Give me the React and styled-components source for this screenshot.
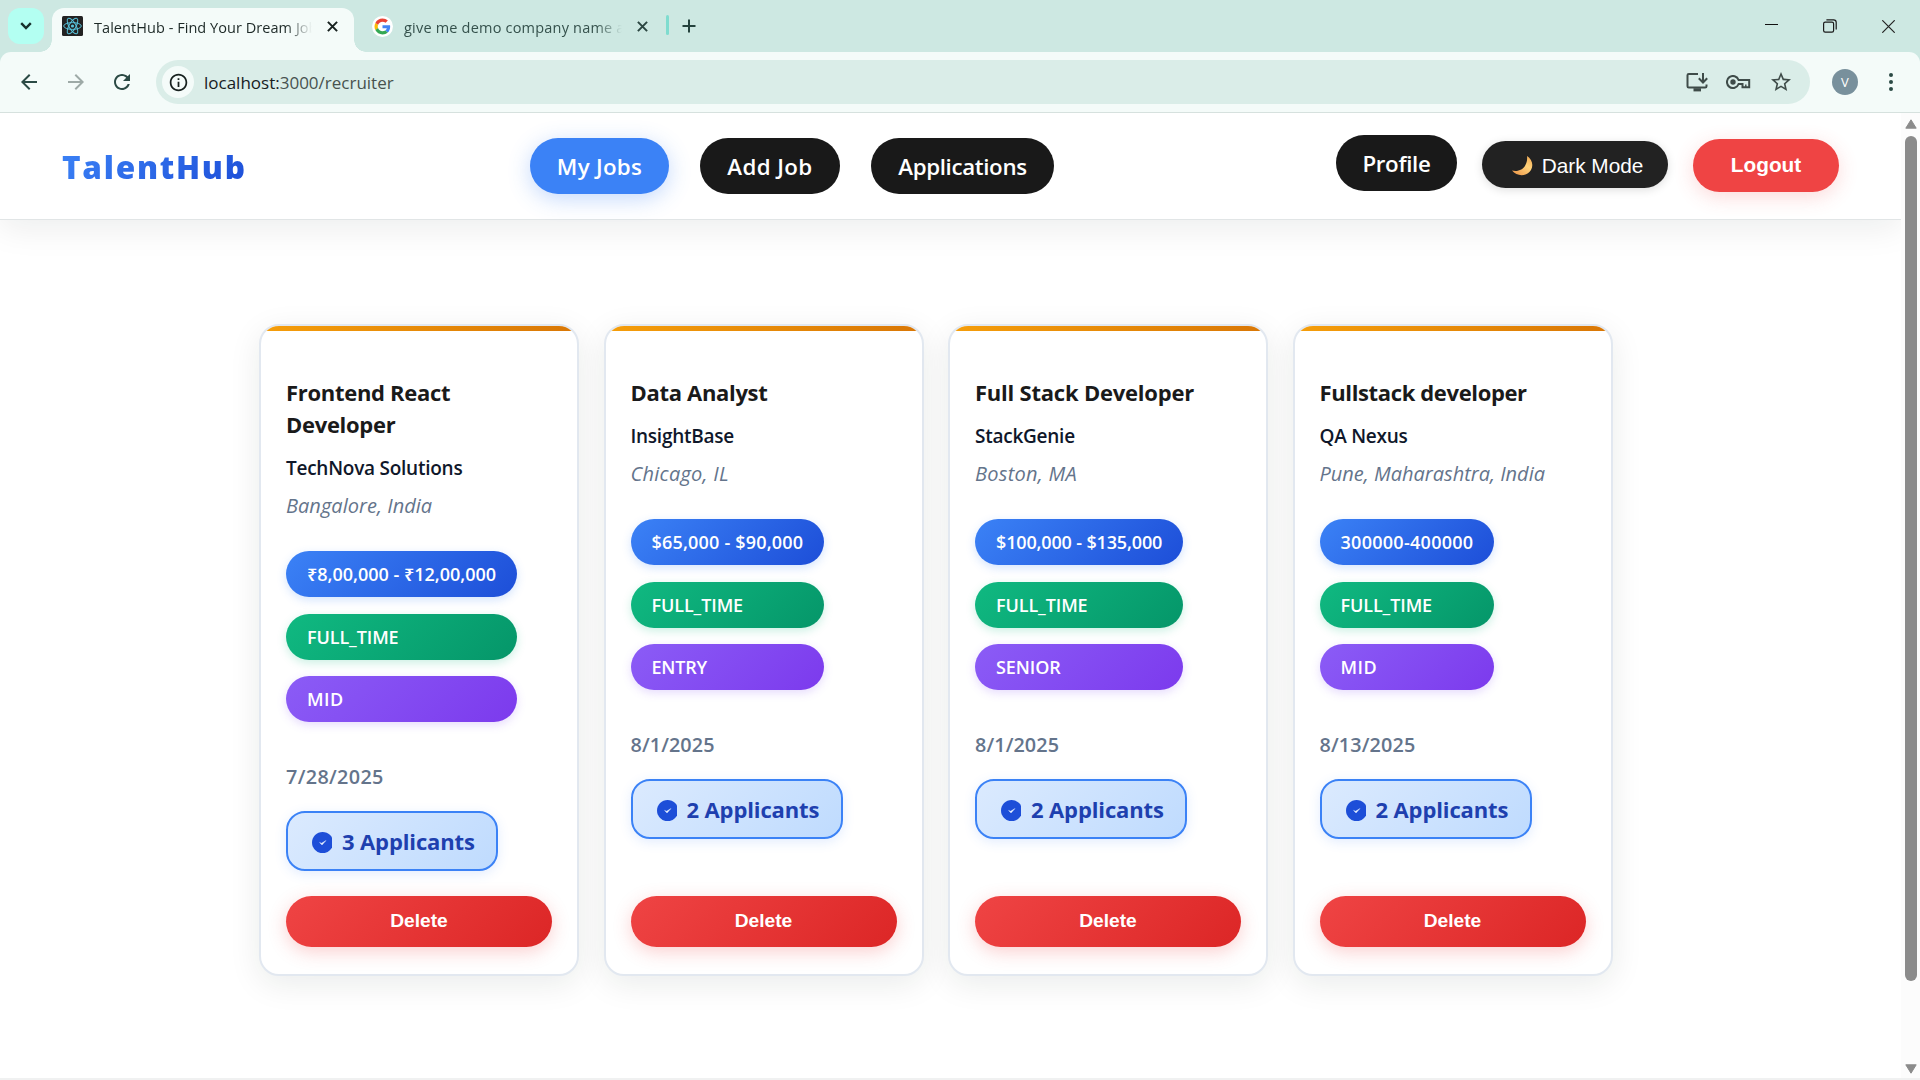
import React from "react";
import styled, { createGlobalStyle, css } from "styled-components";

const GlobalStyle = createGlobalStyle`
  *, *::before, *::after { box-sizing: border-box; }
  body {
    margin: 0;
    overflow: hidden;
    background: #fff;
    font-family: "Open Sans", "Noto Sans", sans-serif;
  }
  button { border: 0; margin: 0; padding: 0; font: inherit; }
  h2, p { margin: 0; }
  svg { display: block; flex: none; }
`;

/* ---------- browser window ---------- */

const Window = styled.div`
  width: 1920px;
  height: 1080px;
  display: flex;
  flex-direction: column;
  overflow: hidden;
  background: #cde8e2;
`;

const TabStrip = styled.div`
  height: 52px;
  display: flex;
  align-items: flex-start;
  padding: 8px 25px 0 8px;
`;

const TabSearch = styled.button`
  width: 36px;
  height: 36px;
  display: grid;
  place-items: center;
  border-radius: 12px;
  background: #b3fff2;
`;

const Tab = styled.div`
  position: relative;
  height: 44px;
  display: flex;
  align-items: center;
  padding: 0 0 8px 10px;
  color: #35514c;
  ${(p) =>
    p.$active
      ? css`
          width: 302px;
          margin-left: 8px;
          border-radius: 12px 12px 0 0;
          background: #f4fbf9;
          color: #1c2826;
          &::before, &::after {
            content: "";
            position: absolute;
            bottom: 0;
            width: 12px;
            height: 12px;
          }
          &::before {
            left: -12px;
            background: radial-gradient(circle at 0 0, transparent 11.5px, #f4fbf9 12px);
          }
          &::after {
            right: -12px;
            background: radial-gradient(circle at 100% 0, transparent 11.5px, #f4fbf9 12px);
          }
        `
      : css`
          width: 312px;
          padding-left: 18px;
        `}
`;

const TabTitle = styled.span`
  width: 218px;
  margin: 3px 15px 0 11px;
  overflow: hidden;
  white-space: nowrap;
  font-size: 14.5px;
  line-height: 22px;
  letter-spacing: ${(p) => p.$track || 0}px;
  mask-image: linear-gradient(90deg, #000 88%, transparent 100%);
`;

const TabDivider = styled.i`
  width: 3px;
  height: 20px;
  margin: 7px 14px 0 0;
  border-radius: 2px;
  background: #7fdccf;
`;

const NewTab = styled.span`
  margin: 11px 0 0 -1px;
`;

const WindowControls = styled.div`
  display: flex;
  align-items: center;
  gap: 45px;
  margin: 11px 0 0 auto;
`;

const Toolbar = styled.div`
  height: 61px;
  display: flex;
  align-items: center;
  padding: 0 17px;
  border-bottom: 1px solid #d6e1de;
  border-radius: 11px 11px 0 0;
  background: #f4fbf9;
`;

const NavIcons = styled.div`
  display: flex;
  gap: 22.5px;
`;

const AddressBar = styled.div`
  width: 1654px;
  height: 44px;
  display: flex;
  align-items: center;
  margin-left: 22px;
  padding: 0 17px 0 6px;
  border-radius: 22px;
  background: #daede8;
`;

const SiteInfo = styled.span`
  width: 32px;
  height: 32px;
  display: grid;
  place-items: center;
  border-radius: 50%;
  background: #f4fbf9;
`;

const Url = styled.span`
  flex: 1;
  margin-left: 10px;
  font-size: 17px;
  color: #47524f;
`;

const Host = styled.span`
  color: #16201e;
`;

const AddressActions = styled.div`
  display: flex;
  align-items: center;
  gap: 18px;
`;

const Avatar = styled.span`
  width: 26px;
  height: 26px;
  display: grid;
  place-items: center;
  margin: 0 31px 0 22px;
  border-radius: 50%;
  background: #78909c;
  color: #fff;
  font-size: 13px;
`;

const Viewport = styled.div`
  flex: 1;
  min-height: 0;
  display: flex;
  background: #fff;
  border-bottom: 2px solid #f0f1f1;
`;

const Scrollbar = styled.div`
  width: 19px;
  display: flex;
  flex-direction: column;
  align-items: center;
  padding: 6px 0 4px;
  background: #fcfcfc;
`;

const ScrollThumb = styled.div`
  width: 12px;
  height: 845px;
  margin: 7px 0 auto;
  border-radius: 6px;
  background: #8b8b8b;
`;

/* ---------- page ---------- */

const Page = styled.div`
  width: 1901px;
  overflow: hidden;
`;

const Navbar = styled.header`
  height: 107px;
  display: flex;
  align-items: center;
  justify-content: space-between;
  padding: 0 62px 0 62px;
  border-bottom: 1px solid #e1e5e6;
  background: #fff;
  box-shadow: 0 8px 32px rgba(10, 30, 25, 0.08);
`;

const Logo = styled.div`
  width: 186px;
  padding-top: 1px;
  font-size: 31.5px;
  font-weight: 800;
  line-height: 40px;
  letter-spacing: 1.75px;
  white-space: nowrap;
  color: transparent;
  background: linear-gradient(135deg, #3b82f6, #1d4ed8);
  background-clip: text;
  -webkit-background-clip: text;
`;

const NavLinks = styled.nav`
  display: flex;
  gap: 31px;
`;

const NavPill = styled.button`
  width: ${(p) => p.$width}px;
  height: 56px;
  margin-bottom: ${(p) => p.$lift || 0}px;
  border-radius: 28px;
  background: ${(p) => (p.$active ? "#3b82f6" : "#191919")};
  box-shadow: ${(p) => (p.$active ? "0 5px 22px rgba(59, 130, 246, 0.3)" : "none")};
  color: #fff;
  font-size: 22.3px;
  font-weight: 600;
  letter-spacing: ${(p) => p.$track || 0}px;
`;

const Account = styled.div`
  display: flex;
  align-items: center;
  gap: 25px;
`;

const ThemeToggle = styled.button`
  width: 186px;
  height: 47px;
  display: flex;
  align-items: center;
  justify-content: center;
  gap: 9px;
  margin-bottom: 3px;
  padding: 2px 0 0 5px;
  border-radius: 24px;
  background: #222;
  box-shadow: 0 2px 10px rgba(0, 0, 0, 0.13);
  color: #fff;
  font: 400 20.8px "Liberation Sans", Arial, sans-serif;
`;

const Logout = styled.button`
  width: 146px;
  height: 53px;
  margin-bottom: 2px;
  border-radius: 27px;
  background: #ef4444;
  box-shadow: 0 5px 20px rgba(239, 68, 68, 0.2);
  color: #fff;
  font: 700 20.8px "Liberation Sans", Arial, sans-serif;
`;

const JobGrid = styled.main`
  display: grid;
  grid-template-columns: repeat(4, 320px);
  column-gap: 24.5px;
  margin: 104px 0 0 259px;
`;

const Card = styled.article`
  height: 652px;
  display: flex;
  flex-direction: column;
  align-items: flex-start;
  overflow: hidden;
  border: 2px solid #e2e8f0;
  border-radius: 20px;
  background: #fff;
  box-shadow: 0 8px 32px rgba(10, 30, 25, 0.085);
`;

const Accent = styled.div`
  align-self: stretch;
  height: 5px;
  background: linear-gradient(90deg, #f59e0b, #d97706);
`;

const CardBody = styled.div`
  flex: 1;
  align-self: stretch;
  display: flex;
  flex-direction: column;
  align-items: flex-start;
  padding: 45px 25px 27px 25px;
`;

const Title = styled.h2`
  color: #1a1a1a;
  font-size: 22px;
  font-weight: 700;
  line-height: 32px;
  letter-spacing: ${(p) => p.$track}px;
`;

const Company = styled.p`
  margin-top: 14px;
  color: #0f172a;
  font-size: 19px;
  font-weight: 600;
  line-height: 28px;
  letter-spacing: -0.25px;
`;

const Place = styled.p`
  margin-top: 9px;
  color: #64748b;
  font-size: 20px;
  font-style: italic;
  line-height: 30px;
  letter-spacing: ${(p) => p.$track || 0}px;
`;

const Tags = styled.div`
  display: grid;
  gap: 16.5px;
  margin-top: 30px;
`;

const tones = {
  salary: ["#3b82f6, #1d4ed8", "59, 130, 246"],
  type: ["#10b981, #059669", "16, 185, 129"],
  level: ["#8b5cf6, #7c3aed", "139, 92, 246"],
};

const Tag = styled.span`
  height: 46px;
  padding: 0 21px;
  border-radius: 23px;
  background: linear-gradient(135deg, ${(p) => tones[p.$tone][0]});
  box-shadow: 0 3px 10px rgba(${(p) => tones[p.$tone][1]}, 0.22);
  color: #fff;
  font-size: 18px;
  font-weight: 600;
  line-height: 46px;
  white-space: nowrap;
  letter-spacing: ${(p) => p.$track || 0}px;
`;

const Posted = styled.p`
  margin-top: 41px;
  color: #64748b;
  font-size: 19.8px;
  font-weight: 600;
  line-height: 28px;
  letter-spacing: ${(p) => p.$track || 0}px;
`;

const Applicants = styled.div`
  width: 212px;
  height: 60px;
  display: flex;
  align-items: center;
  gap: 10px;
  margin-top: 20px;
  padding-left: 24px;
  border: 2px solid #3b82f6;
  border-radius: 19px;
  background: linear-gradient(135deg, #dbeafe, #bfdbfe);
  box-shadow: 0 3px 12px rgba(59, 130, 246, 0.15);
  color: #1e40af;
  font-size: 22px;
  font-weight: 700;
  letter-spacing: -0.12px;
  white-space: nowrap;
`;

const Badge = styled.span`
  padding-top: 3px;
`;

const DeleteButton = styled.button`
  align-self: stretch;
  height: 51px;
  margin-top: auto;
  padding-bottom: 2px;
  border-radius: 26px;
  background: linear-gradient(135deg, #ef4444, #dc2626);
  box-shadow: 0 5px 18px rgba(239, 68, 68, 0.25);
  color: #fff;
  font: 700 19.2px "Liberation Sans", Arial, sans-serif;
`;

/* ---------- icons ---------- */

const Glyph = ({ d, size = 24, fill = "#2b4a45" }) => (
  <svg width={size} height={size} viewBox="0 0 24 24" fill={fill}>
    <path d={d} />
  </svg>
);

const paths = {
  back: "M20 11H7.83l5.59-5.59L12 4l-8 8 8 8 1.41-1.41L7.83 13H20v-2z",
  forward: "M12 4l-1.41 1.41L16.17 11H4v2h12.17l-5.58 5.59L12 20l8-8z",
  reload:
    "M17.65 6.35C16.2 4.9 14.21 4 12 4c-4.42 0-7.99 3.58-7.99 8s3.57 8 7.99 8c3.73 0 6.84-2.55 7.73-6h-2.08c-.82 2.33-3.04 4-5.65 4-3.31 0-6-2.69-6-6s2.69-6 6-6c1.66 0 3.14.69 4.22 1.78L13 11h7V4l-2.35 2.35z",
  info: "M11 7h2v2h-2zm0 4h2v6h-2zm1-9C6.48 2 2 6.48 2 12s4.48 10 10 10 10-4.48 10-10S17.52 2 12 2zm0 18c-4.41 0-8-3.59-8-8s3.59-8 8-8 8 3.59 8 8-3.59 8-8 8z",
  star: "M22 9.24l-7.19-.62L12 2 9.19 8.63 2 9.24l5.46 4.73L5.82 21 12 17.27 18.18 21l-1.63-7.03L22 9.24zM12 15.4l-3.76 2.27 1-4.28-3.32-2.88 4.38-.38L12 6.1l1.71 4.04 4.38.38-3.32 2.88 1 4.28L12 15.4z",
};

const ChevronIcon = () => (
  <svg width="12" height="8" viewBox="0 0 12 8" fill="none" stroke="#17302b" strokeWidth="2.4">
    <path d="M1.2 1.2 6 6l4.8-4.8" />
  </svg>
);

const CloseIcon = ({ color }) => (
  <svg width="11" height="11" viewBox="0 0 11 11" stroke={color} strokeWidth="2">
    <path d="M.9.9l9.2 9.2M10.1.9.9 10.1" />
  </svg>
);

const PlusIcon = () => (
  <svg width="14" height="14" viewBox="0 0 14 14" stroke="#24423d" strokeWidth="2">
    <path d="M7 .5v13M.5 7h13" />
  </svg>
);

const ReactIcon = () => (
  <svg width="21" height="20" viewBox="0 0 21 20" fill="none" stroke="#58c4dc" strokeWidth="1">
    <rect width="21" height="20" rx="1.5" fill="#222" stroke="none" />
    <circle cx="10.5" cy="10" r="1.6" fill="#58c4dc" stroke="none" />
    <ellipse cx="10.5" cy="10" rx="8.8" ry="3.4" />
    <ellipse cx="10.5" cy="10" rx="8.8" ry="3.4" transform="rotate(60 10.5 10)" />
    <ellipse cx="10.5" cy="10" rx="8.8" ry="3.4" transform="rotate(120 10.5 10)" />
  </svg>
);

const GoogleIcon = () => (
  <svg width="21" height="21" viewBox="0 0 63 63">
    <circle cx="31.5" cy="31.5" r="31.5" fill="#fff" />
    <g transform="translate(7.5 7.5)">
      <path fill="#EA4335" d="M24 9.5c3.54 0 6.71 1.22 9.21 3.6l6.85-6.85C35.9 2.38 30.47 0 24 0 14.62 0 6.51 5.38 2.56 13.22l7.98 6.19C12.43 13.72 17.74 9.5 24 9.5z" />
      <path fill="#4285F4" d="M46.98 24.55c0-1.57-.15-3.09-.38-4.55H24v9.02h12.94c-.58 2.96-2.26 5.48-4.78 7.18l7.73 6c4.51-4.18 7.09-10.36 7.09-17.65z" />
      <path fill="#FBBC05" d="M10.53 28.59c-.48-1.45-.76-2.99-.76-4.59s.27-3.14.76-4.59l-7.98-6.19C.92 16.46 0 20.12 0 24c0 3.88.92 7.54 2.56 10.78l7.97-6.19z" />
      <path fill="#34A853" d="M24 48c6.48 0 11.93-2.13 15.89-5.81l-7.73-6c-2.15 1.45-4.92 2.3-8.16 2.3-6.26 0-11.57-4.22-13.47-9.91l-7.98 6.19C6.51 42.62 14.62 48 24 48z" />
    </g>
  </svg>
);

const InstallIcon = () => (
  <svg width="22" height="20" viewBox="0 0 22 20" fill="none" stroke="#3f4c49" strokeWidth="2">
    <path d="M12 2H2.8Q1.5 2 1.5 3.3v10.9q0 1.3 1.3 1.3h16.4q1.3 0 1.3-1.3V12.5" />
    <path d="M7.5 17.8h7.5" strokeWidth="3.2" />
    <path d="M17 1v9M12.8 6.3 17 10.5l4.2-4.2" />
  </svg>
);

const KeyIcon = () => (
  <svg width="25" height="14" viewBox="0 0 25 14" fill="none" stroke="#3f4c49" strokeWidth="2">
    <path d="M12.6 5A6 6 0 1 0 12.6 9H16.5v3.2h6.7V5z" />
    <circle cx="7" cy="7" r="2.7" fill="#3f4c49" stroke="none" />
    <path d="M19.8 12.500V9.500" strokeWidth="1.4" />
  </svg>
);

const MenuIcon = () => (
  <svg width="4" height="18" viewBox="0 0 4 18" fill="#2b4a45">
    <circle cx="2" cy="2" r="2" />
    <circle cx="2" cy="9" r="2" />
    <circle cx="2" cy="16" r="2" />
  </svg>
);

const MinimizeIcon = () => (
  <svg width="13" height="14" viewBox="0 0 13 14" stroke="#111">
    <path d="M0 5.500h13" />
  </svg>
);

const RestoreIcon = () => (
  <svg width="14" height="14" viewBox="0 0 14 14" fill="none" stroke="#1a1a1a" strokeWidth="1.2">
    <rect x=".6" y="3.2" width="10" height="10" rx="1.6" />
    <path d="M3.4.8h7.2q2.6 0 2.6 2.6v7" />
  </svg>
);

const WindowCloseIcon = () => (
  <svg width="13" height="13" viewBox="0 0 13 13" stroke="#222" strokeWidth="1.2">
    <path d="M.3.3l12.4 12.4M12.7.3.3 12.7" />
  </svg>
);

const ScrollArrow = ({ down }) => (
  <svg width="12" height="10" viewBox="0 0 12 10" fill="#8b8b8b" stroke="#8b8b8b" strokeLinejoin="round">
    <path d={down ? "M.8.8h10.4L6 9.2z" : "M.8 9.2h10.4L6 .8z"} />
  </svg>
);

const MoonIcon = () => (
  <svg width="21" height="20" viewBox="0 0 21 20">
    <defs>
      <linearGradient id="moon" x1="1" y1="0" x2="0.2" y2="1">
        <stop offset="0" stopColor="#f3a64e" />
        <stop offset="0.45" stopColor="#ffd27a" />
        <stop offset="1" stopColor="#ee9a4c" />
      </linearGradient>
    </defs>
    <path fill="url(#moon)" d="M15 0C20 3 21.8 9 19 14 15 20.8 5 21 0 14.6 6 16 11 13.5 13.2 9.5 14.8 6.5 15.5 3.5 15 0Z" />
  </svg>
);

const CheckBadge = () => (
  <svg width="20" height="21" viewBox="0 0 20 21">
    <circle cx="10.6" cy="10.6" r="10.6" fill="#1d4ed8" />
    <path d="M7.6 10.4 9.6 11.2 14 8.5 10 13z" fill="#e8f1ff" stroke="#e8f1ff" strokeWidth=".4" />
  </svg>
);

/* ---------- data ---------- */

const jobs = [
  {
    title: "Frontend React Developer", titleTrack: -0.3, company: "TechNova Solutions",
    place: "Bangalore, India", placeTrack: 0.03, salary: "₹8,00,000 - ₹12,00,000", salaryTrack: 0,
    level: "MID", levelTrack: 0.5, posted: "7/28/2025", postedTrack: 0.35, applicants: 3,
  },
  {
    title: "Data Analyst", titleTrack: -0.32, company: "InsightBase",
    place: "Chicago, IL", placeTrack: 0.25, salary: "$65,000 - $90,000", salaryTrack: 0.2,
    level: "ENTRY", levelTrack: -0.2, posted: "8/1/2025", postedTrack: 0.1, applicants: 2,
  },
  {
    title: "Full Stack Developer", titleTrack: -0.22, company: "StackGenie",
    place: "Boston, MA", placeTrack: 0.25, salary: "$100,000 - $135,000", salaryTrack: -0.15,
    level: "SENIOR", levelTrack: -0.1, posted: "8/1/2025", postedTrack: 0.1, applicants: 2,
  },
  {
    title: "Fullstack developer", titleTrack: -0.36, company: "QA Nexus",
    place: "Pune, Maharashtra, India", placeTrack: 0, salary: "300000-400000", salaryTrack: 0.28,
    level: "MID", levelTrack: 0.5, posted: "8/13/2025", postedTrack: 0.15, applicants: 2,
  },
];

const JobCard = ({ job }) => (
  <Card>
    <Accent />
    <CardBody>
      <Title $track={job.titleTrack}>{job.title}</Title>
      <Company>{job.company}</Company>
      <Place $track={job.placeTrack}>{job.place}</Place>
      <Tags>
        <Tag $tone="salary" $track={job.salaryTrack}>{job.salary}</Tag>
        <Tag $tone="type" $track={-0.1}>FULL_TIME</Tag>
        <Tag $tone="level" $track={job.levelTrack}>{job.level}</Tag>
      </Tags>
      <Posted $track={job.postedTrack}>{job.posted}</Posted>
      <Applicants>
        <Badge><CheckBadge /></Badge>
        {job.applicants} Applicants
      </Applicants>
      <DeleteButton>Delete</DeleteButton>
    </CardBody>
  </Card>
);

export default function App() {
  return (
    <Window>
      <GlobalStyle />
      <TabStrip>
        <TabSearch><ChevronIcon /></TabSearch>
        <Tab $active>
          <ReactIcon />
          <TabTitle $track={0.05}>TalentHub - Find Your Dream Job</TabTitle>
          <CloseIcon color="#17211f" />
        </Tab>
        <Tab>
          <GoogleIcon />
          <TabTitle $track={0.2}>give me demo company name and</TabTitle>
          <CloseIcon color="#2b4641" />
        </Tab>
        <TabDivider />
        <NewTab><PlusIcon /></NewTab>
        <WindowControls>
          <MinimizeIcon />
          <RestoreIcon />
          <WindowCloseIcon />
        </WindowControls>
      </TabStrip>
      <Toolbar>
        <NavIcons>
          <Glyph d={paths.back} />
          <Glyph d={paths.forward} fill="#9eaaa7" />
          <Glyph d={paths.reload} />
        </NavIcons>
        <AddressBar>
          <SiteInfo><Glyph d={paths.info} size={21} fill="#17211f" /></SiteInfo>
          <Url><Host>localhost:</Host>3000/recruiter</Url>
          <AddressActions>
            <InstallIcon />
            <KeyIcon />
            <Glyph d={paths.star} fill="#3f4c49" />
          </AddressActions>
        </AddressBar>
        <Avatar>V</Avatar>
        <MenuIcon />
      </Toolbar>
      <Viewport>
        <Page>
          <Navbar>
            <Logo>TalentHub</Logo>
            <NavLinks>
              <NavPill $active $width={139} $track={0.3}>My Jobs</NavPill>
              <NavPill $width={140} $track={0.4}>Add Job</NavPill>
              <NavPill $width={183} $track={-0.35}>Applications</NavPill>
            </NavLinks>
            <Account>
              <NavPill $width={121} $lift={6} $track={-0.3}>Profile</NavPill>
              <ThemeToggle><MoonIcon />Dark Mode</ThemeToggle>
              <Logout>Logout</Logout>
            </Account>
          </Navbar>
          <JobGrid>
            {jobs.map((job) => <JobCard key={job.title} job={job} />)}
          </JobGrid>
        </Page>
        <Scrollbar>
          <ScrollArrow />
          <ScrollThumb />
          <ScrollArrow down />
        </Scrollbar>
      </Viewport>
    </Window>
  );
}
